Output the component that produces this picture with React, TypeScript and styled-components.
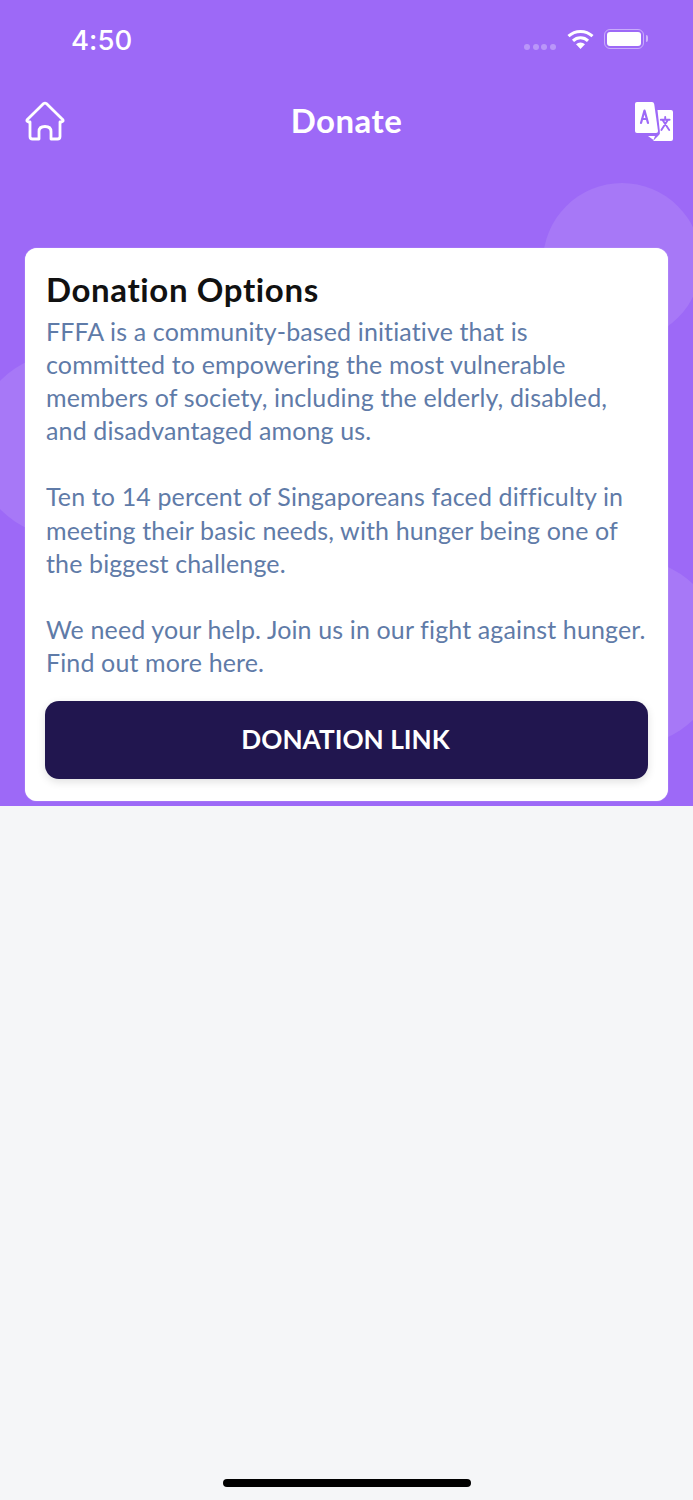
import React from "react";
import styled, { createGlobalStyle } from "styled-components";

const Global = createGlobalStyle`
  html, body { margin: 0; padding: 0; background: #f5f6f8; }
  * { box-sizing: border-box; }
  body { font-family: "Lato", "Open Sans", sans-serif; font-variant-ligatures: none; }
`;

const Page = styled.div`
  width: 693px;
  height: 1500px;
  display: flex;
  flex-direction: column;
  overflow: hidden;
  background: #f5f6f8;
`;

const Hero = styled.header`
  position: relative;
  height: 806px;
  background: #9d69f7;
  overflow: hidden;
  display: flex;
  flex-direction: column;
`;

const Blob = styled.div<{ $x: number; $y: number; $r: number }>`
  position: absolute;
  left: ${(p) => p.$x - p.$r}px;
  top: ${(p) => p.$y - p.$r}px;
  width: ${(p) => p.$r * 2}px;
  height: ${(p) => p.$r * 2}px;
  border-radius: 50%;
  background: rgba(255, 255, 255, 0.1);
`;

const StatusBar = styled.div`
  position: relative;
  height: 80px;
  display: flex;
  align-items: center;
  justify-content: space-between;
  padding: 0 49px 0 71px;
`;

const Time = styled.span`
  font-family: "Inter", sans-serif;
  font-size: 27.5px;
  font-weight: 500;
  color: #fff;
`;

const StatusIcons = styled.div`
  display: flex;
  align-items: center;
  padding-bottom: 2px;
`;

const Dots = styled.div`
  display: flex;
  gap: 2.7px;
  margin: 15px 11px 0 0;
`;

const Dot = styled.span`
  width: 6px;
  height: 6px;
  border-radius: 50%;
  background: rgba(255, 255, 255, 0.3);
`;

const Battery = styled.div`
  position: relative;
  width: 40px;
  height: 20px;
  margin-left: 10px;
  padding: 2px;
  border: 1.5px solid rgba(255, 255, 255, 0.45);
  border-radius: 6px;
`;

const BatteryFill = styled.div`
  height: 100%;
  border-radius: 3px;
  background: #fff;
`;

const BatteryCap = styled.span`
  position: absolute;
  right: -5px;
  top: 4.5px;
  width: 2px;
  height: 7px;
  border-radius: 0 2px 2px 0;
  background: rgba(255, 255, 255, 0.5);
`;

const NavBar = styled.nav`
  position: relative;
  height: 82px;
  display: flex;
  align-items: center;
  justify-content: space-between;
  padding: 0 19px 0 25px;
`;

const NavTitle = styled.h1`
  position: absolute;
  left: 0;
  right: 0;
  margin: 0 0 2px;
  text-align: center;
  font-size: 33px;
  font-weight: 700;
  letter-spacing: 0.5px;
  color: #fff;
`;

const Card = styled.section`
  position: relative;
  margin: 86px 25px 0;
  padding: 20px 20px 22px;
  background: #fff;
  border-radius: 12px;
  box-shadow: 0 0 1px rgba(255, 255, 255, 0.8);
`;

const CardTitle = styled.h2`
  margin: 0;
  padding-left: 1px;
  font-size: 33px;
  line-height: 43px;
  font-weight: 700;
  letter-spacing: 0.62px;
  color: #111;
`;

const Body = styled.div`
  margin-top: 4px;
  padding-left: 1px;
  font-size: 25px;
  line-height: 33.1px;
  letter-spacing: 0.13px;
  color: #5f7ba8;
`;

const Line = styled.span`
  display: block;
  white-space: nowrap;
  min-height: 33.1px;
`;

const DonateButton = styled.button`
  display: block;
  width: 100%;
  height: 78px;
  margin-top: 22px;
  padding: 0 2px 2px 0;
  border: 0;
  border-radius: 14px;
  background: #21164f;
  color: #fff;
  font-family: inherit;
  font-variant-ligatures: none;
  font-size: 26.2px;
  font-weight: 700;
  box-shadow: 0 3px 8px rgba(0, 0, 0, 0.12);
`;

const Footer = styled.div`
  flex: 1;
  display: flex;
  align-items: flex-end;
  justify-content: center;
  padding-bottom: 13px;
`;

const HomeIndicator = styled.div`
  width: 248px;
  height: 8px;
  border-radius: 4px;
  background: #000;
`;

const HomeIcon = () => (
  <svg width="40" height="40" viewBox="0 0 40 40" fill="none" stroke="#fff" strokeWidth="2.8" strokeLinejoin="round" strokeLinecap="round">
    <path d="M18.6 2.6 Q20 1.6 21.4 2.6 L37.6 18.4 Q39 20.4 36.6 21 H35 V35.5 Q35 38 32.5 38 H26 V30.5 Q26 25.5 20 25.5 Q14 25.5 14 30.5 V38 H7.5 Q5 38 5 35.5 V21 H3.4 Q1 20.4 2.4 18.4 Z" />
  </svg>
);

const TranslateIcon = () => (
  <svg width="40" height="41" viewBox="0 0 40 41" fill="none">
    <path d="M3 1 H18 Q19.8 1 20.2 3 L24 30 Q24.2 32 22 32 H3 Q1 32 1 30 V3 Q1 1 3 1 Z" fill="#fff" />
    <path d="M14 35 H21 L19.5 39 Z" fill="#fff" />
    <path d="M23.5 9 H37 Q39 9 39 11 V38 Q39 40 37 40 H19 L24.5 34.5 Q26.5 33 25.8 30 Z" fill="#fff" />
    <path d="M7 22 L10.5 9.5 L14 22 M8 18 H13" stroke="#9d69f7" strokeWidth="2.2" strokeLinecap="round" strokeLinejoin="round" />
    <path d="M26.8 18.8 H35.6 M31.2 16 V18.8 M34 18.8 L27.4 29 M28.4 18.8 L35.2 29" stroke="#9d69f7" strokeWidth="1.9" strokeLinecap="round" />
  </svg>
);

const WifiIcon = () => (
  <svg width="27" height="20" viewBox="0 0 27 20" fill="none">
    <path d="M1.5 7.2 A17.5 17.5 0 0 1 25.5 7.2" stroke="#fff" strokeWidth="3" />
    <path d="M6 11.8 A10.8 10.8 0 0 1 21 11.8" stroke="#fff" strokeWidth="3" />
    <path d="M13.5 20 L9 15.2 A6.8 6.8 0 0 1 18 15.2 Z" fill="#fff" />
  </svg>
);

const paragraphs = [
  [
    "FFFA is a community-based initiative that is",
    "committed to empowering the most vulnerable",
    "members of society, including the elderly, disabled,",
    "and disadvantaged among us.",
  ],
  [
    "Ten to 14 percent of Singaporeans faced difficulty in",
    "meeting their basic needs, with hunger being one of",
    "the biggest challenge.",
  ],
  ["We need your help. Join us in our fight against hunger.", "Find out more here."],
];

export default function App() {
  return (
    <Page>
      <Global />
      <Hero>
        <Blob $x={622} $y={262} $r={79} />
        <Blob $x={66} $y={445} $r={92} />
        <Blob $x={628} $y={652} $r={94} />
        <StatusBar>
          <Time>4:50</Time>
          <StatusIcons>
            <Dots>
              <Dot />
              <Dot />
              <Dot />
              <Dot />
            </Dots>
            <WifiIcon />
            <Battery>
              <BatteryFill />
              <BatteryCap />
            </Battery>
          </StatusIcons>
        </StatusBar>
        <NavBar>
          <HomeIcon />
          <NavTitle>Donate</NavTitle>
          <TranslateIcon />
        </NavBar>
        <Card>
          <CardTitle>Donation Options</CardTitle>
          <Body>
            {paragraphs.map((lines, i) => (
              <React.Fragment key={i}>
                {i > 0 && <Line />}
                {lines.map((l) => (
                  <Line key={l}>{l}</Line>
                ))}
              </React.Fragment>
            ))}
          </Body>
          <DonateButton>DONATION LINK</DonateButton>
        </Card>
      </Hero>
      <Footer>
        <HomeIndicator />
      </Footer>
    </Page>
  );
}
